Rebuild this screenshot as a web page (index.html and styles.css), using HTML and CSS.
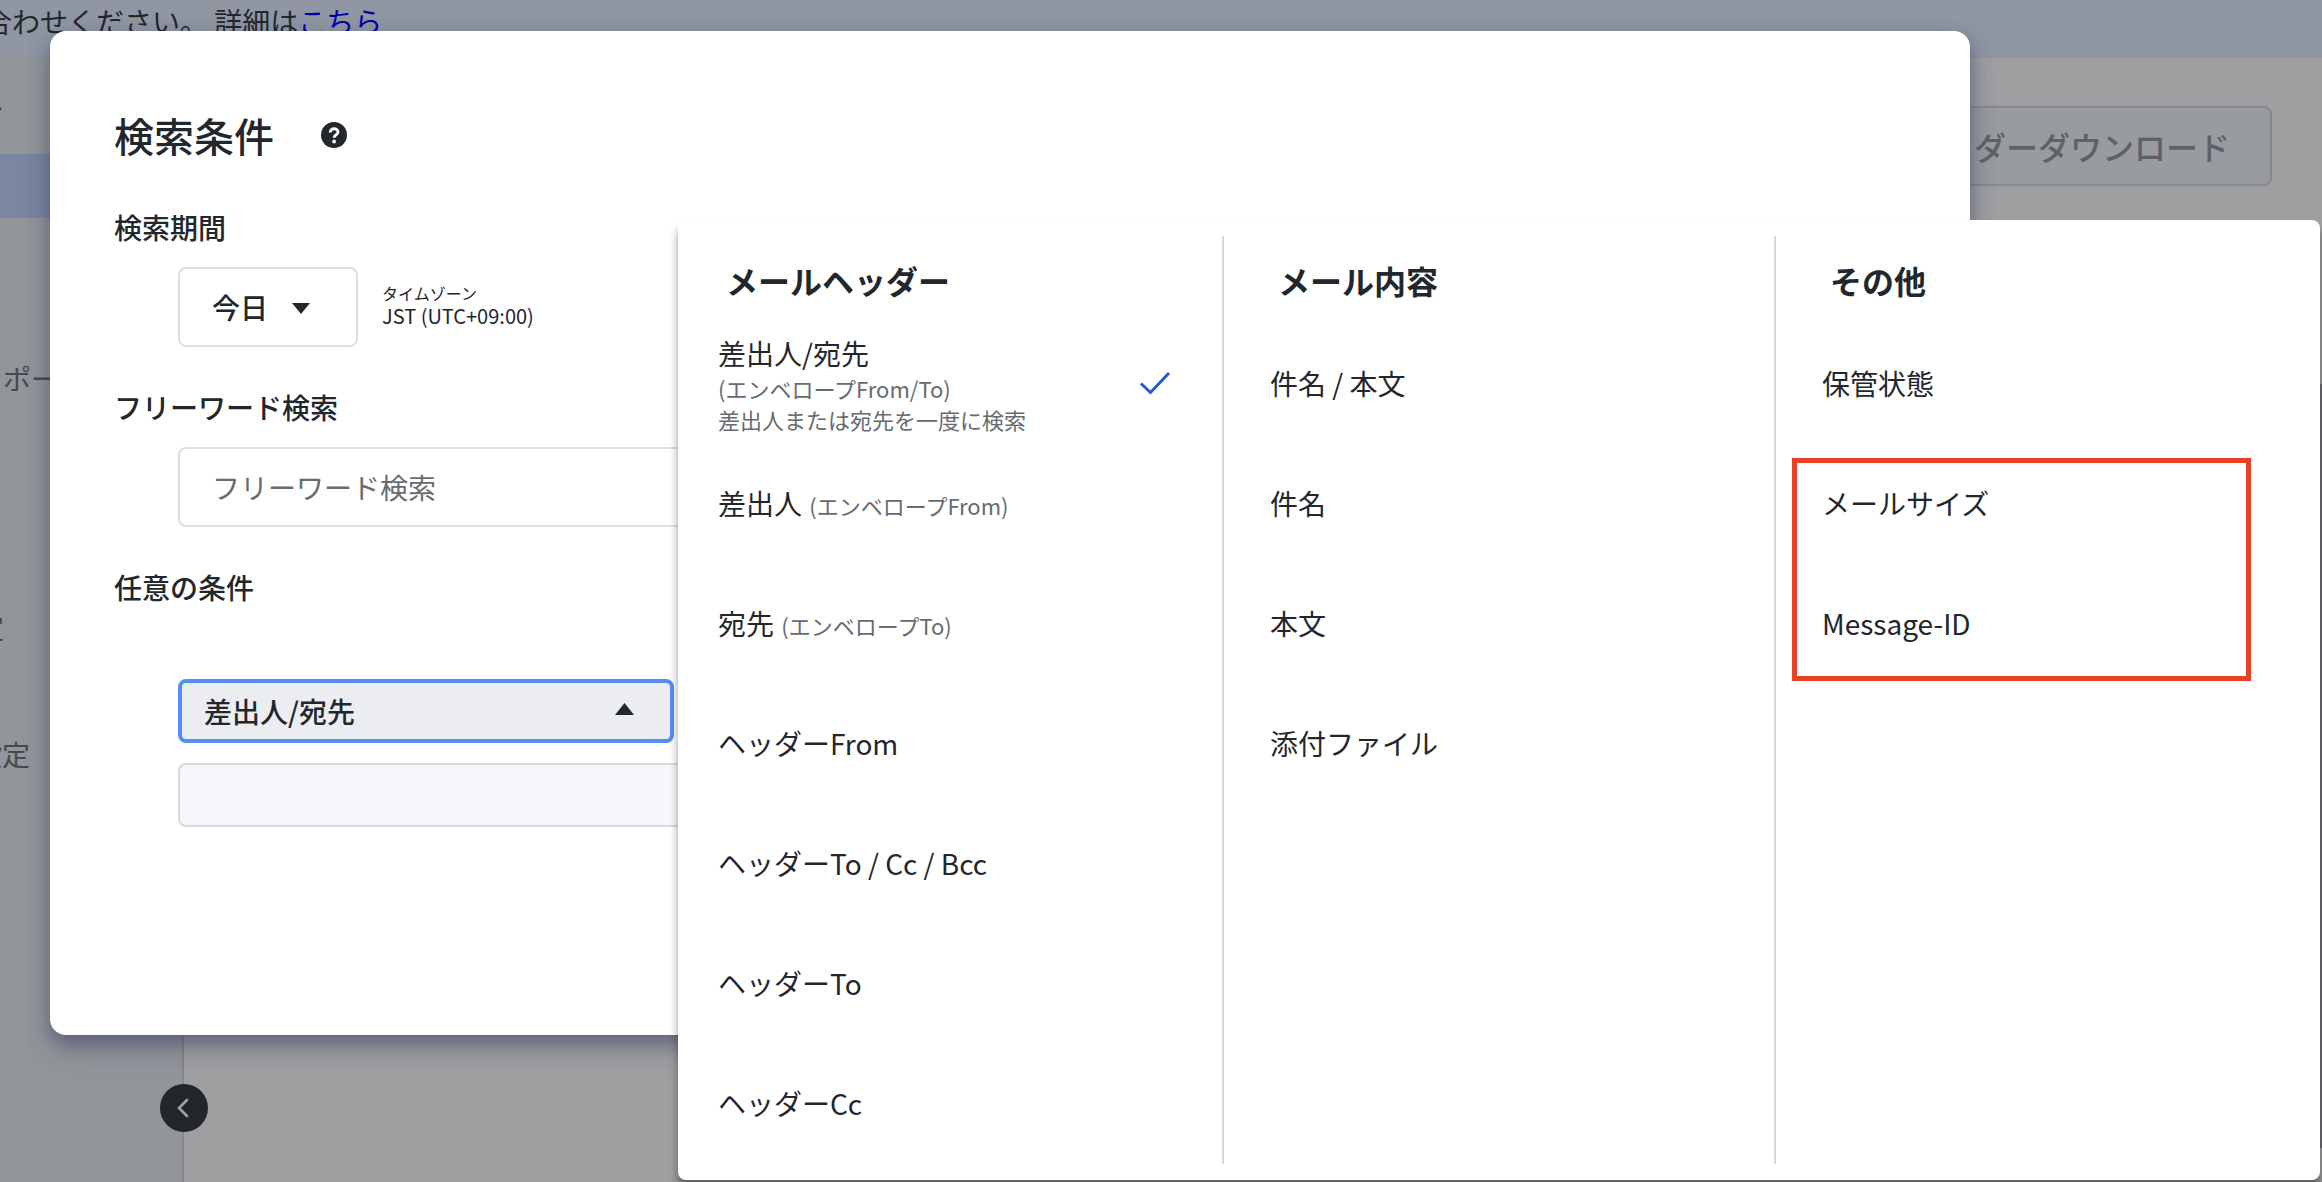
FILE: index.html
```html
<!DOCTYPE html>
<html lang="ja">
<head>
    <meta charset="UTF-8">
    <meta name="viewport" content="width=device-width, initial-scale=1.0">
    <title>検索条件</title>
    <link rel="stylesheet" href="styles.css">
</head>
<body>

    <!-- Page behind the dialog -->
    <div class="page">
        <div class="banner">
            <p>合わせください。 詳細は<a href="#">こちら</a></p>
        </div>
        <div class="content">
            <nav class="sidebar">
                <a class="nav-item nav-report-top">ト</a>
                <a class="nav-item active"></a>
                <a class="nav-item nav-export">スポート</a>
                <a class="nav-item nav-rule">設定</a>
                <a class="nav-item nav-setting">設定</a>
                <button class="collapse">
                    <svg width="48" height="48" viewBox="0 0 48 48">
                        <path d="M27 16 L19 24 L27 32" fill="none" stroke="#a0a1a4" stroke-width="2.6" stroke-linecap="round"/>
                    </svg>
                </button>
            </nav>
            <main class="main">
                <button class="download">ヘッダーダウンロード</button>
            </main>
        </div>
        <div class="scrollbar"></div>
    </div>

    <!-- Search dialog -->
    <div class="modal">
        <div class="modal-title">
            <h1>検索条件</h1>
            <svg class="help" width="26" height="26" viewBox="0 0 26 26">
                <circle cx="13" cy="13" r="13" fill="#22262d"/>
                <path d="M9.2 10.4 C9.2 5.6 17 5.6 17 10.1 C17 12.9 13.1 12.6 13.1 15.8" fill="none" stroke="#fff" stroke-width="2.9"/>
                <circle cx="13.1" cy="19.5" r="1.9" fill="#fff"/>
            </svg>
        </div>

        <h2>検索期間</h2>
        <div class="period">
            <button class="period-select">今日
                <svg width="18" height="11" viewBox="0 0 18 11"><path d="M0 0 H18 L9 11 Z" fill="#22262d"/></svg>
            </button>
            <div class="timezone">
                <small>タイムゾーン</small>
                <span>JST (UTC+09:00)</span>
            </div>
        </div>

        <h2>フリーワード検索</h2>
        <input class="freeword" type="text" placeholder="フリーワード検索">

        <h2>任意の条件</h2>
        <button class="field-select">差出人/宛先
            <svg width="19" height="12" viewBox="0 0 19 12"><path d="M9.5 0 L19 12 H0 Z" fill="#22262d"/></svg>
        </button>
        <input class="field-value" type="text">
    </div>

    <!-- Field list -->
    <div class="dropdown">
        <section class="column">
            <h3>メールヘッダー</h3>
            <ul>
                <li class="selected">
                    <div class="label">
                        <p>差出人/宛先</p>
                        <p class="note">(エンベロープFrom/To)</p>
                        <p class="note">差出人または宛先を一度に検索</p>
                    </div>
                    <svg width="32" height="24" viewBox="0 0 32 24">
                        <path d="M2 12.5 L11.5 21.5 L30 2" fill="none" stroke="#2459d6" stroke-width="3"/>
                    </svg>
                </li>
                <li><p class="label">差出人 <span class="note">(エンベロープFrom)</span></p></li>
                <li><p class="label">宛先 <span class="note">(エンベロープTo)</span></p></li>
                <li>ヘッダーFrom</li>
                <li>ヘッダーTo / Cc / Bcc</li>
                <li>ヘッダーTo</li>
                <li>ヘッダーCc</li>
            </ul>
        </section>
        <section class="column">
            <h3>メール内容</h3>
            <ul>
                <li>件名 / 本文</li>
                <li>件名</li>
                <li>本文</li>
                <li>添付ファイル</li>
            </ul>
        </section>
        <section class="column">
            <h3>その他</h3>
            <ul>
                <li>保管状態</li>
                <li>メールサイズ</li>
                <li>Message-ID</li>
            </ul>
            <div class="highlight"></div>
        </section>
    </div>

</body>
</html>
```
FILE: styles.css
```css
:root {
    --text: #22262d;
    --text-sub: #676a70;
    --border: #dfdfe0;
    --divider: #d5d8e0;
    --page-bg: #9f9fa2;
    --sidebar-bg: #92959a;
}

* {
    box-sizing: border-box;
}

body {
    margin: 0;
    width: 2322px;
    height: 1182px;
    overflow: hidden;
    position: relative;
    font-family: "Noto Sans CJK JP", sans-serif;
    font-size: 28px;
    line-height: 40px;
    color: var(--text);
}

h1, h2, h3, p, ul {
    margin: 0;
    padding: 0;
}

button, input {
    font: inherit;
    color: inherit;
}

/* Page behind the dialog */
.page {
    height: 100%;
    display: flex;
    flex-direction: column;
    background: var(--page-bg);
}

.banner {
    height: 58px;
    background: #9097a3;
    border-bottom: 2px solid #8b97a8;
}

.banner p {
    margin-left: -16px;
    padding-top: 1px;
    white-space: nowrap;
}

.banner a {
    color: #0000a8;
}

.content {
    flex: 1;
    display: flex;
}

.sidebar {
    width: 184px;
    position: relative;
    display: flex;
    flex-direction: column;
    background: var(--sidebar-bg);
    border-right: 2px solid #81868b;
    color: #45484d;
}

.nav-item {
    height: 64px;
    line-height: 64px;
    white-space: nowrap;
    overflow: hidden;
}

.nav-report-top {
    margin-top: 16px;
    text-indent: -22px;
}

.nav-item.active {
    margin-top: 16px;
    background: #7b86a0;
}

.nav-export {
    margin-top: 128px;
    text-indent: -25px;
}

.nav-rule {
    margin-top: 185px;
    text-indent: -52px;
}

.nav-setting {
    margin-top: 63px;
    text-indent: -26px;
}

.collapse {
    position: absolute;
    left: 160px;
    bottom: 50px;
    width: 48px;
    height: 48px;
    padding: 0;
    border: none;
    border-radius: 50%;
    background: #22262b;
}

.collapse svg {
    display: block;
}

.main {
    flex: 1;
    display: flex;
    justify-content: flex-end;
    align-items: flex-start;
    padding: 48px 50px;
}

.download {
    height: 80px;
    padding: 0 40px;
    font-size: 32px;
    font-weight: 500;
    color: #5e6267;
    background: #989b9f;
    border: 2px solid #86898e;
    border-radius: 8px;
}

.scrollbar {
    position: absolute;
    top: 384px;
    right: 0;
    width: 4px;
    height: 764px;
    background: #6c6d71;
}

/* Search dialog */
.modal {
    position: absolute;
    top: 31px;
    left: 50px;
    width: 1920px;
    height: 1004px;
    padding: 74px 64px 0;
    background: #fff;
    border-radius: 16px;
    box-shadow: 0 16px 32px rgba(70, 74, 90, 0.12), 0 9px 20px rgba(50, 58, 95, 0.55);
}

.modal-title {
    display: flex;
    align-items: center;
    gap: 47px;
    height: 60px;
    margin-bottom: 42px;
}

h1 {
    font-size: 40px;
    font-weight: 500;
    line-height: 60px;
}

h2 {
    font-size: 28px;
    font-weight: 500;
    line-height: 40px;
    margin-bottom: 20px;
}

.period {
    display: flex;
    margin-left: 64px;
    margin-bottom: 40px;
}

.period-select {
    display: flex;
    align-items: center;
    gap: 24px;
    width: 180px;
    height: 80px;
    padding: 0 32px;
    font-weight: 500;
    background: #fff;
    border: 2px solid var(--border);
    border-radius: 8px;
}

.period-select svg {
    margin-top: 3px;
}

.timezone {
    display: flex;
    flex-direction: column;
    padding: 16px 0 0 24px;
    font-size: 20px;
    line-height: 26px;
}

.timezone small {
    font-size: 16px;
    line-height: 20px;
}

.freeword {
    display: block;
    width: 1664px;
    height: 80px;
    margin: 0 0 40px 64px;
    padding: 0 32px;
    border: 2px solid var(--border);
    border-radius: 8px;
}

.freeword::placeholder {
    color: var(--text-sub);
}

.field-select {
    display: flex;
    align-items: center;
    justify-content: space-between;
    width: 496px;
    height: 64px;
    margin: 72px 0 20px 64px;
    padding: 0 36px 0 22px;
    font-weight: 500;
    background: #ecedf1;
    border: 4px solid #558df8;
    border-radius: 8px;
}

.field-select svg {
    margin-top: -4px;
}

.field-value {
    display: block;
    width: 1200px;
    height: 64px;
    margin-left: 64px;
    background: #f6f7fa;
    border: 2px solid #d8dadc;
    border-radius: 8px;
}

/* Field list */
.dropdown {
    position: absolute;
    top: 220px;
    left: 678px;
    width: 1642px;
    height: 960px;
    padding: 16px 0;
    display: grid;
    grid-template-columns: 546px 552px 1fr;
    background: #fff;
    border-radius: 8px;
    box-shadow: 0 8px 9px rgba(0, 0, 0, 0.4);
}

.column {
    position: relative;
    padding-left: 46px;
    border-right: 2px solid var(--divider);
}

.column:first-child {
    padding-left: 40px;
}

.column:last-child {
    border-right: none;
}

h3 {
    padding-left: 8px;
    font-size: 32px;
    font-weight: 700;
    line-height: 88px;
    margin-bottom: -1px;
}

ul {
    list-style: none;
}

li {
    display: flex;
    align-items: center;
    height: 120px;
}

.selected {
    justify-content: space-between;
    padding-right: 51px;
}

.label {
    padding-top: 2px;
}

.note {
    font-size: 22px;
    color: var(--text-sub);
}

span.note {
    margin-left: 1px;
}

.selected .note {
    line-height: 31px;
}

.highlight {
    position: absolute;
    top: 222px;
    left: 16px;
    width: 459px;
    height: 223px;
    border: 5px solid #e94126;
}
```
